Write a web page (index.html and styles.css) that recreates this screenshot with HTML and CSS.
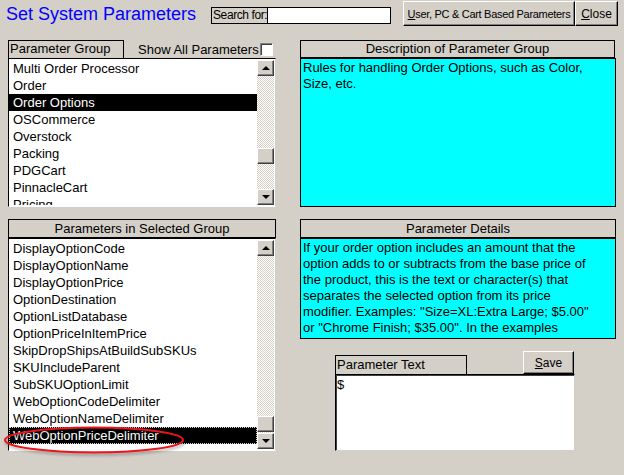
FILE: index.html
```html
<!DOCTYPE html>
<html lang="en">
<head>
    <meta charset="UTF-8">
    <meta name="viewport" content="width=device-width, initial-scale=1.0">
    <title>Set System Parameters</title>
    <link rel="stylesheet" href="styles.css">
</head>
<body>
    <div class="window">
        <div class="topbar">
            <h1 class="title">Set System Parameters</h1>
            <div class="search">
                <span class="search-label">Search for:</span>
                <span class="search-input"></span>
            </div>
            <button class="btn btn-wide"><u>U</u>ser, PC &amp; Cart Based Parameters</button>
            <button class="btn btn-close"><u>C</u>lose</button>
        </div>

        <div class="panels">
            <div class="col">
                <div class="group-head">
                    <div class="label-box">Parameter Group</div>
                    <div class="show-all">Show All Parameters<span class="checkbox"></span></div>
                </div>
                <div class="listbox list-groups">
                    <ul class="items">
                        <li>Multi Order Processor</li>
                        <li>Order</li>
                        <li class="selected">Order Options</li>
                        <li>OSCommerce</li>
                        <li>Overstock</li>
                        <li>Packing</li>
                        <li>PDGCart</li>
                        <li>PinnacleCart</li>
                        <li>Pricing</li>
                    </ul>
                    <div class="scrollbar">
                        <div class="sb-btn"><span class="arrow-up"></span></div>
                        <div class="track">
                            <div class="track-before groups-before"></div>
                            <div class="sb-btn thumb"></div>
                        </div>
                        <div class="sb-btn"><span class="arrow-down"></span></div>
                    </div>
                </div>

                <div class="caption caption-gap">Parameters in Selected Group</div>
                <div class="listbox list-params">
                    <ul class="items">
                        <li>DisplayOptionCode</li>
                        <li>DisplayOptionName</li>
                        <li>DisplayOptionPrice</li>
                        <li>OptionDestination</li>
                        <li>OptionListDatabase</li>
                        <li>OptionPriceInItemPrice</li>
                        <li>SkipDropShipsAtBuildSubSKUs</li>
                        <li>SKUIncludeParent</li>
                        <li>SubSKUOptionLimit</li>
                        <li>WebOptionCodeDelimiter</li>
                        <li>WebOptionNameDelimiter</li>
                        <li class="selected focused">WebOptionPriceDelimiter</li>
                    </ul>
                    <div class="scrollbar">
                        <div class="sb-btn"><span class="arrow-up"></span></div>
                        <div class="track">
                            <div class="track-before params-before"></div>
                            <div class="sb-btn thumb"></div>
                        </div>
                        <div class="sb-btn"><span class="arrow-down"></span></div>
                    </div>
                </div>
            </div>

            <div class="col">
                <div class="caption caption-short">Description of Parameter Group</div>
                <div class="info info-group">Rules for handling Order Options, such as Color,<br>Size, etc.</div>

                <div class="caption caption-gap">Parameter Details</div>
                <div class="info info-details">If your order option includes an amount that the<br>option adds to or subtracts from the base price of<br>the product, this is the text or character(s) that<br>separates the selected option from its price<br>modifier. Examples: "Size=XL:Extra Large; $5.00"<br>or "Chrome Finish; $35.00". In the examples</div>

                <div class="param-text">
                    <div class="param-row">
                        <div class="label-box param-label">Parameter Text</div>
                        <button class="btn btn-save"><u>S</u>ave</button>
                    </div>
                    <div class="textbox">$</div>
                </div>
            </div>
        </div>

        <!-- red marker round the chosen parameter -->
        <svg class="marker" width="200" height="40" viewBox="0 0 200 40">
            <defs>
                <filter id="shade" x="-10%" y="-30%" width="120%" height="180%">
                    <feDropShadow dx="1" dy="2" stdDeviation="1.5" flood-color="#000" flood-opacity="0.35"/>
                </filter>
            </defs>
            <ellipse cx="92" cy="20" rx="89" ry="12.5" fill="none" stroke="#e8141c" stroke-width="2" filter="url(#shade)"/>
        </svg>
    </div>
</body>
</html>
```

FILE: styles.css
```css
* {
    box-sizing: border-box;
}

body {
    margin: 0;
    background: #d4d0c8;
    font-family: 'Liberation Sans', Arial, sans-serif;
    font-size: 13px;
    color: #000;
    overflow: hidden;
}

.window {
    position: relative;
    width: 624px;
    height: 475px;
}

/* top bar */
.topbar {
    display: flex;
    align-items: flex-start;
    height: 40px;
    padding-left: 6px;
}

.title {
    width: 205px;
    margin: 3px 0 0;
    font-size: 18px;
    font-weight: normal;
    line-height: 22px;
    color: #0000ff;
}

.search {
    display: flex;
    width: 180px;
    height: 17px;
    margin-top: 7px;
    border: 1px solid #000;
}

.search-label {
    width: 56px;
    padding-left: 1px;
    font-size: 12px;
    letter-spacing: -0.4px;
    line-height: 15px;
    white-space: nowrap;
    border-right: 1px solid #000;
}

.search-input {
    flex: 1;
    background: #fff;
}

.btn {
    height: 25px;
    padding: 0;
    font-family: inherit;
    font-size: 12px;
    white-space: nowrap;
    color: #000;
    background: #d4d0c8;
    border: 1px solid;
    border-color: #fff #000 #000 #fff;
    box-shadow: inset -1px -1px #808080;
}

.btn-wide {
    width: 172px;
    margin: 1px 0 0 12px;
    font-size: 11px;
    letter-spacing: -0.3px;
}

.btn-close {
    width: 43px;
    margin-top: 1px;
}

/* two columns */
.panels {
    display: grid;
    grid-template-columns: 268px 316px;
    column-gap: 24px;
    padding-left: 8px;
}

.col {
    display: flex;
    flex-direction: column;
}

.group-head {
    display: flex;
    height: 18px;
}

.label-box {
    width: 116px;
    height: 18px;
    padding-left: 1px;
    line-height: 16px;
    border: 1px solid #000;
    border-bottom: none;
}

.show-all {
    display: flex;
    align-items: center;
    margin-left: 14px;
    height: 18px;
}

.checkbox {
    width: 13px;
    height: 13px;
    margin-left: 1px;
    background: #fff;
    border: 1px solid;
    border-color: #808080 #fff #fff #808080;
    box-shadow: inset 1px 1px #404040;
}

.caption {
    height: 19px;
    line-height: 17px;
    text-align: center;
    background: #d4d0c8;
    border: 1px solid #000;
}

.caption-short {
    height: 18px;
    width: 315px;
    line-height: 16px;
}

.caption-gap {
    margin-top: 12px;
}

/* list boxes */
.listbox {
    display: flex;
    padding: 1px 1px 1px 0;
    background: #fff;
    border: 1px solid;
    border-color: #000 #d4d0c8 #fff #000;
    overflow: hidden;
}

.list-groups {
    height: 149px;
}

.list-params {
    height: 213px;
}

.items {
    flex: 1;
    margin: 0;
    padding: 0;
    list-style: none;
    overflow: hidden;
}

.items li {
    height: 17px;
    padding-left: 4px;
    line-height: 17px;
    white-space: nowrap;
}

.items .selected {
    background: #000;
    color: #fff;
}

.items .focused {
    outline: 1px dotted #d4d0c8;
    outline-offset: -1px;
}

.scrollbar {
    display: flex;
    flex-direction: column;
    width: 17px;
}

.sb-btn {
    display: flex;
    align-items: center;
    justify-content: center;
    height: 16px;
    flex-shrink: 0;
    background: #d4d0c8;
    border: 1px solid;
    border-color: #fff #404040 #404040 #fff;
    box-shadow: inset -1px -1px #808080;
}

.track {
    flex: 1;
    display: flex;
    flex-direction: column;
    background-color: #fff;
    background-image: repeating-conic-gradient(#d4d0c8 0 25%, #fff 0 50%);
    background-size: 2px 2px;
}

.groups-before {
    height: 72px;
}

.params-before {
    height: 160px;
}

.arrow-up,
.arrow-down {
    width: 0;
    height: 0;
    border-left: 4px solid transparent;
    border-right: 4px solid transparent;
}

.arrow-up {
    border-bottom: 4px solid #000;
}

.arrow-down {
    border-top: 4px solid #000;
}

/* cyan info boxes */
.info {
    padding: 1px 2px;
    line-height: 16px;
    white-space: nowrap;
    background: #00ffff;
    border: 1px solid #000;
    overflow: hidden;
}

.info-group {
    height: 149px;
}

.info-details {
    height: 101px;
}

/* parameter text */
.param-text {
    margin-top: 12px;
    padding-left: 35px;
}

.param-row {
    display: flex;
    align-items: flex-end;
    height: 23px;
}

.param-label {
    width: 132px;
    height: 19px;
    line-height: 18px;
}

.btn-save {
    width: 51px;
    height: 23px;
    margin-left: 56px;
}

.textbox {
    width: 240px;
    height: 77px;
    padding: 2px 1px;
    line-height: 15px;
    background: #fff;
    border: 1px solid;
    border-color: #000 #d4d0c8 #d4d0c8 #000;
    box-shadow: inset 1px 1px #404040;
}

.marker {
    position: absolute;
    left: 2px;
    top: 420px;
}
```
